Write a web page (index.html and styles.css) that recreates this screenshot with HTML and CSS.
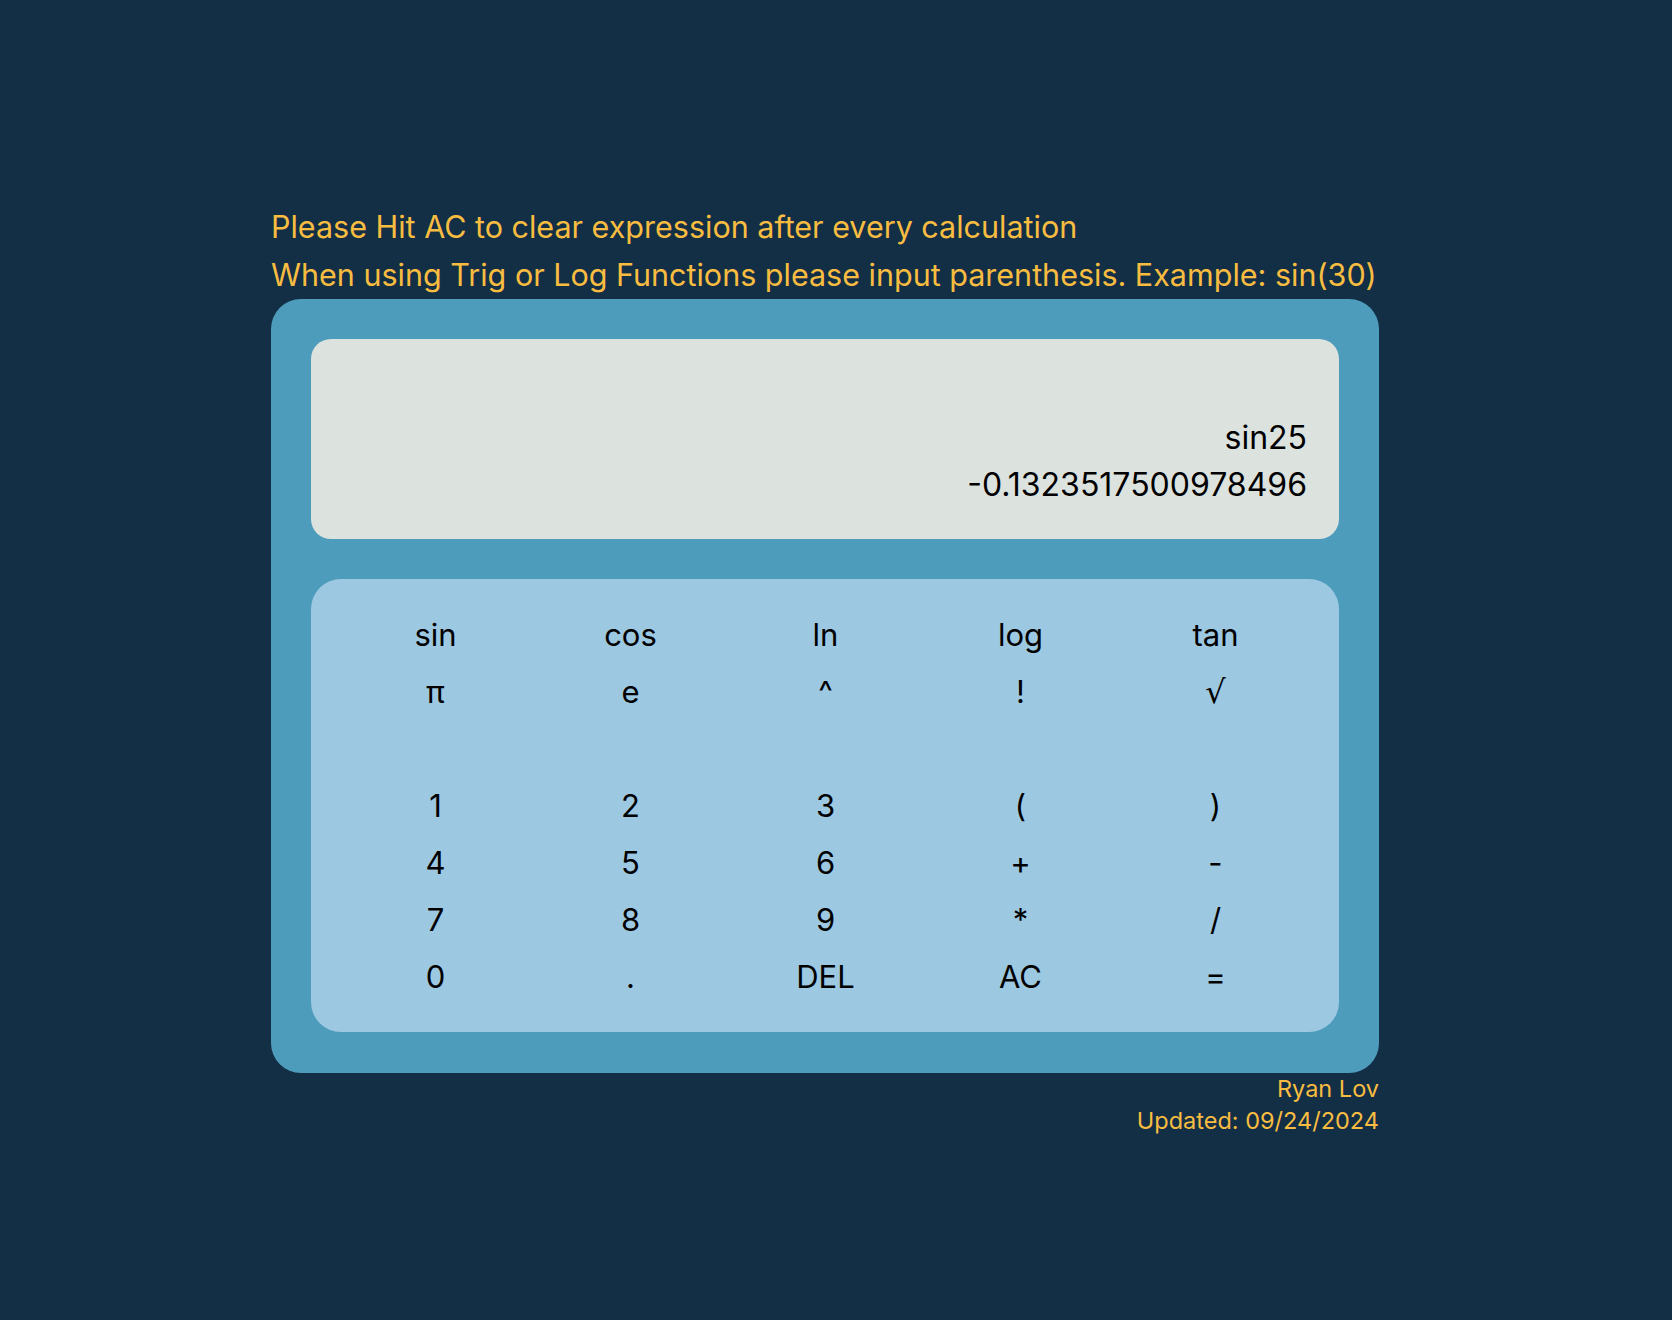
FILE: index.html
```html
<!DOCTYPE html>
<html lang="en">
<head>
<meta charset="utf-8">
<title>Calculator</title>
<link rel="stylesheet" href="styles.css">
</head>
<body>
<div class="page">
  <div class="wrap">
    <p class="note">Please Hit AC to clear expression after every calculation</p>
    <p class="note">When using Trig or Log Functions please input parenthesis. Example: sin(30)</p>
    <div class="calc">
      <div class="display">
        <div class="expr">sin25</div>
        <div class="result">-0.1323517500978496</div>
      </div>
      <div class="keypad">
        <button class="key">sin</button>
        <button class="key">cos</button>
        <button class="key">ln</button>
        <button class="key">log</button>
        <button class="key">tan</button>
        <button class="key">π</button>
        <button class="key">e</button>
        <button class="key">^</button>
        <button class="key">!</button>
        <button class="key key-root">√</button>
        <div class="spacer"></div>
        <button class="key">1</button>
        <button class="key">2</button>
        <button class="key">3</button>
        <button class="key">(</button>
        <button class="key">)</button>
        <button class="key">4</button>
        <button class="key">5</button>
        <button class="key">6</button>
        <button class="key">+</button>
        <button class="key">-</button>
        <button class="key">7</button>
        <button class="key">8</button>
        <button class="key">9</button>
        <button class="key">*</button>
        <button class="key">/</button>
        <button class="key">0</button>
        <button class="key">.</button>
        <button class="key">DEL</button>
        <button class="key">AC</button>
        <button class="key">=</button>
      </div>
    </div>
    <div class="footer">
      <div>Ryan Lov</div>
      <div>Updated: 09/24/2024</div>
    </div>
  </div>
</div>
</body>
</html>
```
FILE: styles.css
```css
html, body {
  margin: 0;
  padding: 0;
}
body {
  background: #122f46;
  font-family: Inter, "Noto Sans", sans-serif;
  min-height: 1320px;
}
.page {
  display: flex;
  padding: 203px 0 0 271px;
}
.wrap {
  width: 1108px;
  display: flex;
  flex-direction: column;
}
.note {
  margin: 0;
  color: #f8bd40;
  font-size: 30.5px;
  line-height: 48px;
  white-space: nowrap;
}
.calc {
  background: #4e9cbc;
  border-radius: 30px;
  padding: 40px 40px 41px;
  display: flex;
  flex-direction: column;
  gap: 40px;
}
.display {
  box-sizing: border-box;
  height: 200px;
  background: #dce2de;
  border-radius: 20px;
  padding: 0 32px 31px;
  display: flex;
  flex-direction: column;
  justify-content: flex-end;
  align-items: flex-end;
  color: #000;
  font-size: 32px;
  line-height: 47px;
}
.keypad {
  background: #9cc8e2;
  border-radius: 30px;
  padding: 27px 26px 27px 27px;
  display: grid;
  grid-template-columns: repeat(5, 1fr);
  grid-auto-rows: 57px;
}
.spacer {
  grid-column: 1 / -1;
}
.key {
  background: none;
  border: none;
  padding: 0;
  margin: 0;
  font-family: Inter, "Noto Sans", sans-serif;
  font-size: 31px;
  color: #000;
  display: flex;
  align-items: center;
  justify-content: center;
}
.key-root {
  font-family: "DejaVu Sans", sans-serif;
  font-size: 32px;
}
.footer {
  color: #f8bd40;
  font-size: 23.5px;
  line-height: 32px;
  text-align: right;
}
```
